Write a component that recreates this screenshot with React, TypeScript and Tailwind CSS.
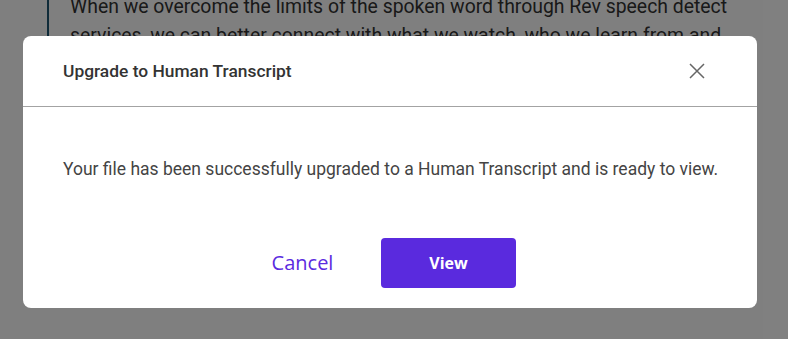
import React from "react";

export default function App() {
  return (
    <div className="relative w-[788px] h-[339px] overflow-hidden bg-white">
      {/* page content behind overlay */}
      <div className="flex pl-[47px]">
        <div className="w-[2px] h-[60px] bg-[#1f5673]" />
        <div
          className="pl-[21px] text-[19.4px] leading-[29px] text-[#333] -mt-[8px] whitespace-nowrap"
          style={{ fontFamily: "Roboto, sans-serif" }}
        >
          <p>When we overcome the limits of the spoken word through Rev speech detect</p>
          <p>services, we can better connect with what we watch, who we learn from and</p>
        </div>
      </div>

      {/* overlay */}
      <div className="absolute inset-0 bg-black/50 pt-[36px] px-[23px]">
        <div className="w-[734px] h-[272px] bg-white rounded-[8px] flex flex-col">
          <div className="h-[71px] flex items-center justify-between pl-[40px] pr-[52px] border-b border-[#a3a3a3]">
            <span
              className="text-[17.4px] font-medium text-[#333]"
              style={{ fontFamily: "Roboto, sans-serif" }}
            >
              Upgrade to Human Transcript
            </span>
            <svg width="16" height="16" viewBox="0 0 16 16" className="mt-[-1px]">
              <path d="M1 1 L15 15 M15 1 L1 15" stroke="#666" strokeWidth="1.5" fill="none" />
            </svg>
          </div>
          <div className="pl-[40px] pt-[50px] pb-[57px]">
            <p
              className="text-[17.5px] leading-[24px] text-[#444]"
              style={{ fontFamily: "Roboto, sans-serif" }}
            >
              Your file has been successfully upgraded to a Human Transcript and is ready to view.
            </p>
          </div>
          <div
            className="flex justify-center gap-[11px] pr-[29px]"
            style={{ fontFamily: "'Open Sans', sans-serif" }}
          >
            <button className="w-[135px] h-[50px] text-[20px] text-[#5b2be0] bg-transparent">
              Cancel
            </button>
            <button className="w-[135px] h-[50px] rounded-[4px] bg-[#5a2ade] text-white text-[16px] font-bold">
              View
            </button>
          </div>
        </div>
      </div>
    </div>
  );
}
